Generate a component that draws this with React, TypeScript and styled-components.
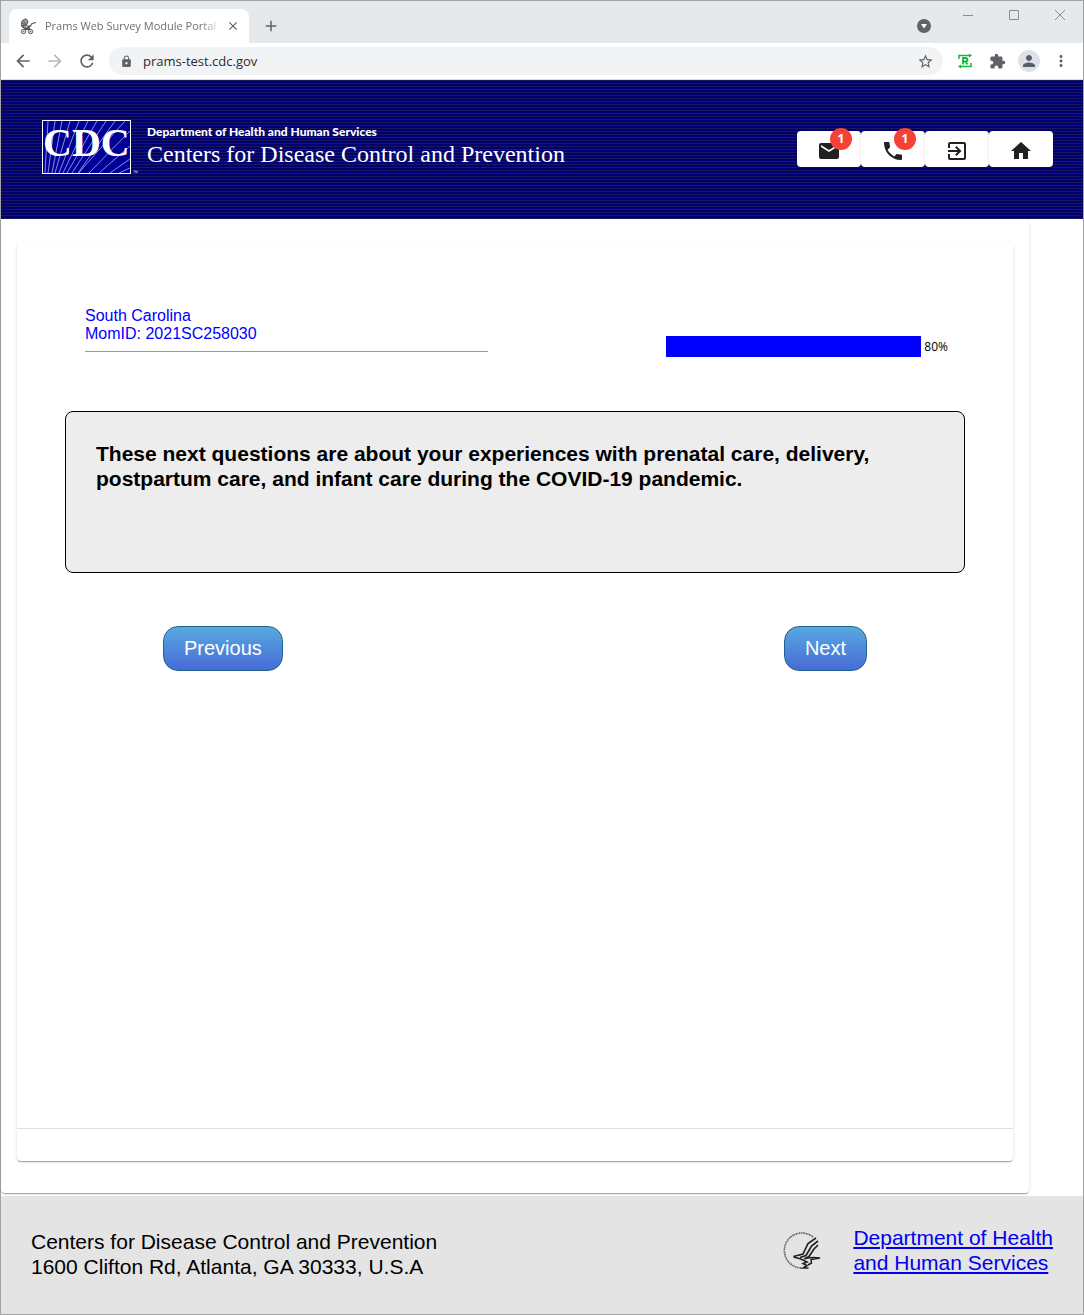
import React from 'react';
import styled, { createGlobalStyle } from 'styled-components';
import {
  MdArrowBack, MdArrowForward, MdRefresh, MdLock, MdStarBorder, MdExtension, MdPerson,
  MdMoreVert, MdMail, MdPhone, MdExitToApp, MdHome, MdClose, MdAdd,
} from 'react-icons/md';

const GlobalStyle = createGlobalStyle`
  * { box-sizing: border-box; }
  body { margin: 0; background: #fff; font-family: "Liberation Sans", Arial, sans-serif; color: #000; }
  button { font: inherit; color: inherit; margin: 0; padding: 0; border: 0; background: none; cursor: pointer; }
  svg { display: block; flex: none; }
`;

const uiFont = '"Open Sans", "Noto Sans", sans-serif';
const elevation = '0 2px 1px -1px rgba(0,0,0,.2), 0 1px 1px rgba(0,0,0,.14), 0 1px 3px rgba(0,0,0,.12)';

const Window = styled.div`
  min-height: 100vh;
  display: flex;
  flex-direction: column;
  border: 1px solid #a0a2a4;
`;

/* Browser chrome */
const TabStrip = styled.div`
  display: flex;
  height: 42px;
  padding-left: 8px;
  background: #e5e9ec;
  color: #5f6368;
`;

const Tab = styled.div`
  display: flex;
  align-items: center;
  width: 240px;
  height: 34px;
  margin-top: 8px;
  padding: 0 9px 0 11px;
  border-radius: 8px 8px 0 0;
  background: #fff;
`;

const TabTitle = styled.span`
  flex: 1;
  min-width: 0;
  margin: 0 4px 0 8px;
  overflow: hidden;
  white-space: nowrap;
  font: 11px/16px ${uiFont};
  color: #6b6f74;
  mask-image: linear-gradient(90deg, #000 88%, transparent);
`;

const IconButton = styled.button<{ $size?: number; $color?: string }>`
  display: flex;
  align-items: center;
  justify-content: center;
  width: ${p => p.$size ?? 32}px;
  height: ${p => p.$size ?? 32}px;
  color: ${p => p.$color ?? '#5f6368'};
`;

const NewTab = styled(IconButton)`
  margin: 9px 0 0 6px;
`;

const TabSearch = styled(IconButton)`
  margin: 9px 5px 0 auto;
`;

const WindowButton = styled(IconButton)`
  width: 46px;
  height: 28px;
  color: #8a8d90;
`;

const Toolbar = styled.div`
  display: flex;
  align-items: center;
  height: 37px;
  padding: 0 6px;
  border-bottom: 1px solid #dcdde0;
  background: #fff;
`;

const AddressBar = styled.label`
  flex: 1;
  display: flex;
  align-items: center;
  gap: 10px;
  height: 28px;
  margin: 0 6px;
  padding: 0 9px 0 11px;
  border-radius: 14px;
  background: #f1f3f4;
  color: #5f6368;
`;

const Address = styled.input`
  flex: 1;
  min-width: 0;
  padding: 0;
  border: 0;
  outline: 0;
  background: transparent;
  font: 13px/20px ${uiFont};
  color: #2a2c2f;
`;

const Avatar = styled.span`
  display: flex;
  align-items: center;
  justify-content: center;
  width: 22px;
  height: 22px;
  border-radius: 50%;
  background: #dee1e6;
  color: #545c6e;
`;

/* Site banner */
const Banner = styled.header`
  display: flex;
  align-items: center;
  justify-content: space-between;
  height: 139px;
  padding: 0 30px 2px 41px;
  background: repeating-linear-gradient(180deg, #18185a 0 1px, #000074 1px 3px);
`;

const Brand = styled.div`
  display: flex;
  align-items: center;
  padding-bottom: 4px;
  color: #fff;
`;

const BrandText = styled.div`
  display: flex;
  flex-direction: column;
  margin: 0 0 2px 8px;
`;

const Agency = styled.span`
  font: 900 12px/16px Lato, sans-serif;
`;

const Center = styled.span`
  font: 24px/28px "Liberation Serif", "Times New Roman", serif;
`;

const Actions = styled.nav`
  display: flex;
`;

const Action = styled.button`
  display: flex;
  justify-content: center;
  width: 64px;
  height: 36px;
  padding-top: 8px;
  border-radius: 4px;
  background: #fff;
  color: #212121;
  box-shadow: ${elevation};
`;

const ActionIcon = styled.span`
  position: relative;
  width: 24px;
  height: 24px;
`;

const Badge = styled.span`
  position: absolute;
  top: -11px;
  left: 13px;
  width: 22px;
  height: 22px;
  border-radius: 50%;
  background: #f44336;
  color: #fff;
  text-align: center;
  font: bold 12px/22px "Noto Sans", sans-serif;
`;

/* Survey */
const Outer = styled.main`
  flex: 1;
  display: flex;
  margin: 0 54px 3px 0;
  padding: 24px 16px 32px;
  border-radius: 4px;
  background: #fff;
  box-shadow: ${elevation};
`;

const Card = styled.section`
  flex: 1;
  display: flex;
  flex-direction: column;
  border-radius: 4px;
  background: #fff;
  box-shadow: ${elevation};
`;

const Survey = styled.div`
  flex: 1;
  padding: 64px 48px 0;
`;

const CardFooter = styled.div`
  height: 33px;
  border-top: 1px solid #e0e0e0;
`;

const SurveyHead = styled.div`
  display: flex;
  align-items: flex-end;
  justify-content: space-between;
  padding: 0 17px 0 20px;
`;

const Participant = styled.div`
  width: 100%;
  max-width: 403px;
  margin-bottom: 5px;
  padding-bottom: 8px;
  border-bottom: 1px solid #9a9a9a;
  font-size: 16px;
  line-height: 18px;
  color: #0000ff;
`;

const Progress = styled.label`
  display: flex;
  align-items: center;
  gap: 3px;
  font: 12px/20px ${uiFont};
`;

const Meter = styled.progress`
  appearance: none;
  width: 255px;
  height: 21px;
  border: 0;
  background: transparent;
  &::-webkit-progress-bar { background: #0000ff; }
  &::-webkit-progress-value { background: #0000ff; }
`;

const Question = styled.div`
  min-height: 162px;
  margin-top: 54px;
  padding: 29px 30px;
  border: 1px solid #000;
  border-radius: 8px;
  background: #ededed;
`;

const QuestionText = styled.h1`
  margin: 0;
  font-size: 21px;
  line-height: 25px;
  font-weight: bold;
`;

const Buttons = styled.div`
  display: flex;
  justify-content: space-between;
  margin-top: 53px;
  padding: 0 98px;
`;

const StepButton = styled.button`
  height: 45px;
  padding: 0 20px;
  border: 1px solid #1f628d;
  border-radius: 15px;
  background: linear-gradient(#58a9e0, #476bd6);
  color: #fff;
  font-size: 20px;
  line-height: 23px;
`;

/* Site footer */
const Footer = styled.footer`
  display: flex;
  align-items: center;
  justify-content: space-between;
  height: 118px;
  padding: 0 30px 2px;
  background: #e4e4e4;
  font-size: 21px;
  line-height: 25px;
`;

const PostalAddress = styled.address`
  font-style: normal;
`;

const Department = styled.div`
  display: flex;
  align-items: center;
  gap: 32px;
  margin-top: -8px;
`;

const DepartmentLink = styled.a`
  color: #0000ee;
`;

const Stroller = () => (
  <svg width="17" height="17" viewBox="0 0 17 17" fill="none" stroke="#555">
    <path d="M1.500 8C1 3 3 1 6 1Q8 2 8 4L6.500 7Z" fill="#999" />
    <path d="M3 2.500L6.500 7M1.500 5L6.500 7" strokeWidth="0.700" />
    <path d="M1.500 8H10.500L12 5.500L16 4.500M2 8.500Q6 12 10.500 8M3.500 11.500L10 10M10.500 11.500L4 10" strokeWidth="1.200" />
    <circle cx="3.500" cy="13.500" r="2.200" /><circle cx="10.500" cy="13.500" r="2.200" />
    <circle cx="3.500" cy="13.500" r="0.500" /><circle cx="10.500" cy="13.500" r="0.500" />
  </svg>
);

const TabSearchIcon = () => (
  <svg width="14" height="14" viewBox="0 0 14 14">
    <circle cx="7" cy="7" r="7" fill="#5f6368" />
    <path d="M4 5H10L7 9.500Z" fill="#fff" />
  </svg>
);

const ReplayExtension = () => (
  <svg width="16" height="16" viewBox="0 0 16 16" fill="none" stroke="#14b83c" strokeWidth="1.500">
    <path d="M2 6V2.500H13M14 10V13.500H3" />
    <path d="M12 0.500L15 2.500L12 4.500ZM4 11.500L1 13.500L4 15.500Z" fill="#14b83c" stroke="none" />
    <path d="M6 11.500V5H8.500Q10.500 5 10.500 6.800Q10.500 8.500 8.500 8.500H6M8.500 8.500L10.500 11.500" strokeWidth="1.800" />
  </svg>
);

const CdcLogo = () => (
  <svg width="97" height="56" viewBox="0 0 97 56" role="img" aria-label="CDC">
    <rect x="0.500" y="1.500" width="88" height="53" fill="#000099" stroke="#fff" />
    <g stroke="#aab0e6" strokeWidth="0.800">
      <path d="M6 2L3 54M13 2L6 54M20 2L10 54M28 2L13 54M37 2L17 54M46 2L21 54M55 2L25 54M64 2L30 54M73 2L36 54M83 2L40 50L37 54M88 12L47 54M88 27L57 54M88 40L68 54M88 49L77 54" fill="none" />
    </g>
    <text x="1" y="37" fill="#fff" fontFamily="Liberation Serif, serif" fontWeight="bold" fontSize="40">CDC</text>
    <text x="91" y="55" fill="#fff" fontFamily="Liberation Sans, sans-serif" fontSize="5">™</text>
  </svg>
);

const HhsLogo = () => (
  <svg width="38" height="40" viewBox="0 -2 38 40" fill="none" stroke="#222" role="img" aria-label="HHS">
    <path d="M30 5A17.500 17.500 0 1 0 19 36" stroke="#555" strokeWidth="1.600" strokeDasharray="1.300 0.700 0.900 0.500" />
    <path d="M33 6L25 11.500L20 22L10.500 24.500" strokeWidth="1.700" />
    <path d="M35 9L28.500 14L23 23.500L17 25.500M35 13L31 17L26 24.500L21 27" strokeWidth="1.700" />
    <path d="M10.500 25Q17 26 24 30L20 31.500L24 33.500L20 36H25.500" strokeWidth="1.500" />
    <path d="M23 26.500Q29 25 37 26L28 27.500L28.500 31L25 33" strokeWidth="1.500" />
  </svg>
);

export default function App() {
  return (
    <Window>
      <GlobalStyle />
      <TabStrip>
        <Tab>
          <Stroller />
          <TabTitle>Prams Web Survey Module Portal</TabTitle>
          <IconButton $size={14} aria-label="Close tab"><MdClose size={14} /></IconButton>
        </Tab>
        <NewTab aria-label="New tab"><MdAdd size={18} /></NewTab>
        <TabSearch aria-label="Search tabs"><TabSearchIcon /></TabSearch>
        <WindowButton aria-label="Minimize">
          <svg width="10" height="10" stroke="currentColor"><path d="M0 5.500H10" /></svg>
        </WindowButton>
        <WindowButton aria-label="Maximize">
          <svg width="10" height="10" stroke="currentColor" fill="none"><path d="M.5 .5H9.500V9.500H.5Z" /></svg>
        </WindowButton>
        <WindowButton aria-label="Close">
          <svg width="10" height="10" stroke="currentColor"><path d="M0 0L10 10M10 0L0 10" /></svg>
        </WindowButton>
      </TabStrip>
      <Toolbar>
        <IconButton aria-label="Back"><MdArrowBack size={20} /></IconButton>
        <IconButton $color="#b6b8ba" aria-label="Forward"><MdArrowForward size={20} /></IconButton>
        <IconButton aria-label="Reload"><MdRefresh size={20} /></IconButton>
        <AddressBar>
          <MdLock size={13} />
          <Address defaultValue="prams-test.cdc.gov" aria-label="Address" />
          <MdStarBorder size={17} />
        </AddressBar>
        <IconButton aria-label="Replay"><ReplayExtension /></IconButton>
        <IconButton aria-label="Extensions"><MdExtension size={17} /></IconButton>
        <IconButton aria-label="Profile"><Avatar><MdPerson size={18} /></Avatar></IconButton>
        <IconButton aria-label="Menu"><MdMoreVert size={18} /></IconButton>
      </Toolbar>

      <Banner>
        <Brand>
          <CdcLogo />
          <BrandText>
            <Agency>Department of Health and Human Services</Agency>
            <Center>Centers for Disease Control and Prevention</Center>
          </BrandText>
        </Brand>
        <Actions>
          <Action aria-label="Mail"><ActionIcon><MdMail size={24} /><Badge>1</Badge></ActionIcon></Action>
          <Action aria-label="Phone"><ActionIcon><MdPhone size={24} /><Badge>1</Badge></ActionIcon></Action>
          <Action aria-label="Exit"><ActionIcon><MdExitToApp size={24} /></ActionIcon></Action>
          <Action aria-label="Home"><ActionIcon><MdHome size={24} /></ActionIcon></Action>
        </Actions>
      </Banner>

      <Outer>
        <Card>
          <Survey>
            <SurveyHead>
              <Participant>South Carolina<br />MomID: 2021SC258030</Participant>
              <Progress><Meter value={80} max={100} />80%</Progress>
            </SurveyHead>
            <Question>
              <QuestionText>
                These next questions are about your experiences with prenatal care, delivery, postpartum care, and infant care during the COVID-19 pandemic.
              </QuestionText>
            </Question>
            <Buttons>
              <StepButton>Previous</StepButton>
              <StepButton>Next</StepButton>
            </Buttons>
          </Survey>
          <CardFooter />
        </Card>
      </Outer>

      <Footer>
        <PostalAddress>Centers for Disease Control and Prevention<br />1600 Clifton Rd, Atlanta, GA 30333, U.S.A</PostalAddress>
        <Department>
          <HhsLogo />
          <DepartmentLink href="#hhs">Department of Health<br />and Human Services</DepartmentLink>
        </Department>
      </Footer>
    </Window>
  );
}
